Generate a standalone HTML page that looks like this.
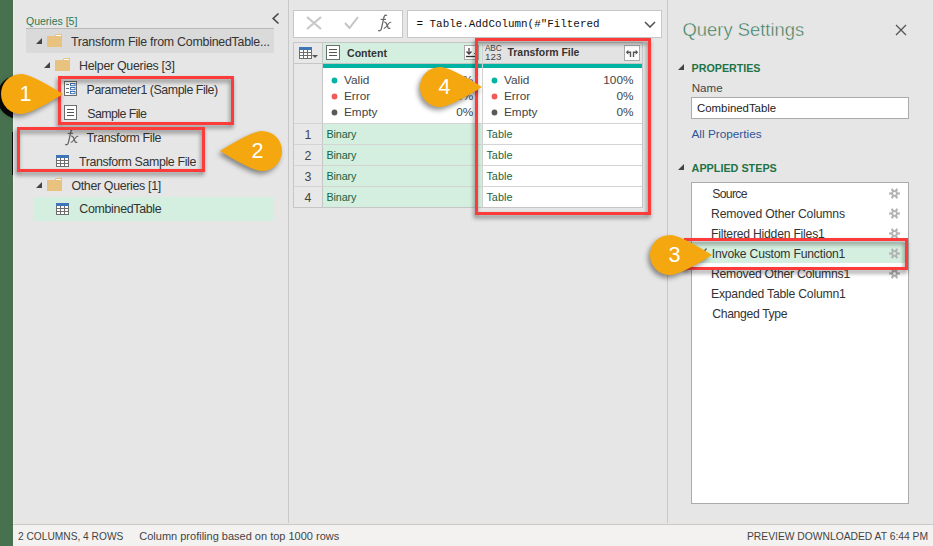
<!DOCTYPE html>
<html><head><meta charset="utf-8"><style>
html,body{margin:0;padding:0;}
body{width:933px;height:546px;position:relative;overflow:hidden;background:#e6e6e6;font-family:"Liberation Sans",sans-serif;}
.a{position:absolute;}
.t{position:absolute;white-space:pre;}
svg.a{display:block;}
</style></head><body>
<div class="a" style="left:0px;top:0px;width:13px;height:546px;background:#47714f"></div>
<div class="a" style="left:13px;top:0px;width:1px;height:524px;background:#ededed"></div>
<div class="a" style="left:0;top:0;width:13px;height:546px;overflow:hidden"><div class="a" style="left:-3px;top:75px;width:44px;height:44px;border-radius:50%;background:#0a0a0a"></div><div class="a" style="left:12px;top:132px;width:1px;height:43px;background:#0a0a0a"></div></div>
<div class="a" style="left:288px;top:0px;width:1px;height:523px;background:#c8c8c8"></div>
<div class="a" style="left:667px;top:0px;width:1px;height:523px;background:#c8c8c8"></div>
<div class="a" style="left:13px;top:524px;width:920px;height:22px;background:#f3f2f1;border-top:1px solid #c9c9c9;box-sizing:border-box"></div>
<div class="t" style="left:26px;top:15.91px;font-size:10.5px;line-height:10.5px;color:#2b7a53;font-weight:400;font-family:'Liberation Sans';">Queries [5]</div>
<div class="a" style="left:26px;top:28px;width:248px;height:1px;background:#b9b9b9"></div>
<div class="a" style="left:26px;top:29px;width:248px;height:24px;background:#dadada"></div>
<svg class="a" style="left:36px;top:38px;" width="6" height="6" viewBox="0 0 6 6"><polygon points="6,0 6,6 0,6" fill="#444"/></svg>
<svg class="a" style="left:47px;top:34px;" width="15" height="13" viewBox="0 0 15 13"><rect x="0" y="2" width="15" height="11" fill="#e8c27f"/><polygon points="7.5,2 9,0 15,0 15,3" fill="#e8c27f"/><rect x="9" y="1" width="5" height="1" fill="#fff"/></svg>
<div class="t" style="left:70.90px;top:35.80px;font-size:12.4px;line-height:12.4px;letter-spacing:-0.244px;color:#333;font-weight:400;font-family:'Liberation Sans';">Transform File from CombinedTable...</div>
<svg class="a" style="left:44px;top:62px;" width="6" height="6" viewBox="0 0 6 6"><polygon points="6,0 6,6 0,6" fill="#444"/></svg>
<svg class="a" style="left:55px;top:58px;" width="15" height="13" viewBox="0 0 15 13"><rect x="0" y="2" width="15" height="11" fill="#e8c27f"/><polygon points="7.5,2 9,0 15,0 15,3" fill="#e8c27f"/><rect x="9" y="1" width="5" height="1" fill="#fff"/></svg>
<div class="t" style="left:79.00px;top:59.80px;font-size:12.4px;line-height:12.4px;letter-spacing:-0.277px;color:#333;font-weight:400;font-family:'Liberation Sans';">Helper Queries [3]</div>
<svg class="a" style="left:64px;top:81px;" width="13" height="15" viewBox="0 0 13 15"><rect x="0.5" y="0.5" width="12" height="14" fill="#fff" stroke="#6d6d6d"/><path d="M2 3.5H5" stroke="#6d6d6d"/><rect x="6.5" y="2.5" width="4.5" height="2.2" fill="none" stroke="#3f74b6"/><path d="M2 7.5H5" stroke="#6d6d6d"/><rect x="6.5" y="6.5" width="4.5" height="2.2" fill="none" stroke="#3f74b6"/><path d="M2 11.5H5" stroke="#6d6d6d"/><rect x="6.5" y="10.5" width="4.5" height="2.2" fill="none" stroke="#3f74b6"/></svg>
<div class="t" style="left:86.60px;top:83.80px;font-size:12.4px;line-height:12.4px;letter-spacing:-0.449px;color:#333;font-weight:400;font-family:'Liberation Sans';">Parameter1 (Sample File)</div>
<svg class="a" style="left:64px;top:105px;" width="13" height="15" viewBox="0 0 13 15"><rect x="0.5" y="0.5" width="12" height="14" fill="#fff" stroke="#6d6d6d"/><path d="M3 4.5H10" stroke="#555"/><path d="M3 7.5H10" stroke="#555"/><path d="M3 10.5H10" stroke="#555"/></svg>
<div class="t" style="left:87.30px;top:107.80px;font-size:12.4px;line-height:12.4px;letter-spacing:-0.583px;color:#333;font-weight:400;font-family:'Liberation Sans';">Sample File</div>
<svg class="a" style="left:59px;top:124px;" width="22" height="22" viewBox="0 0 22 22"><path d="M15 5.6C14.2 4.8 12.6 4.8 12 7L9.4 18.6C9 20.6 7.6 21.2 6.2 20.4" fill="none" stroke="#666" stroke-width="1.25"/><path d="M8.6 9.4H14" stroke="#666" stroke-width="1.1"/><path d="M12.2 12.2C13.6 11.8 14.2 12.6 14.8 14.2L16 17.4C16.5 18.6 17.4 18.6 18.2 18" fill="none" stroke="#666" stroke-width="1.3"/><path d="M19.2 12.4C18.2 11.9 17.4 12.6 16.4 13.8L14 17C13.3 18 12.5 18.4 11.8 18" fill="none" stroke="#666" stroke-width="1.1"/></svg>
<div class="t" style="left:86.60px;top:131.50px;font-size:12.4px;line-height:12.4px;letter-spacing:-0.347px;color:#333;font-weight:400;font-family:'Liberation Sans';">Transform File</div>
<svg class="a" style="left:56px;top:155px;" width="13" height="12" viewBox="0 0 13 12"><rect x="0.5" y="0.5" width="12" height="11" fill="#fff" stroke="#6d6d6d"/><rect x="0" y="0" width="13" height="3" fill="#3f74b6"/><path d="M4.5 3V12M8.5 3V12M0 5.5H13M0 8.5H13" stroke="#6d6d6d" stroke-width="1"/></svg>
<div class="t" style="left:78.90px;top:155.50px;font-size:12.4px;line-height:12.4px;letter-spacing:-0.373px;color:#333;font-weight:400;font-family:'Liberation Sans';">Transform Sample File</div>
<svg class="a" style="left:36px;top:182px;" width="6" height="6" viewBox="0 0 6 6"><polygon points="6,0 6,6 0,6" fill="#444"/></svg>
<svg class="a" style="left:47px;top:178px;" width="15" height="13" viewBox="0 0 15 13"><rect x="0" y="2" width="15" height="11" fill="#e8c27f"/><polygon points="7.5,2 9,0 15,0 15,3" fill="#e8c27f"/><rect x="9" y="1" width="5" height="1" fill="#fff"/></svg>
<div class="t" style="left:71.40px;top:179.50px;font-size:12.4px;line-height:12.4px;letter-spacing:-0.325px;color:#333;font-weight:400;font-family:'Liberation Sans';">Other Queries [1]</div>
<div class="a" style="left:34px;top:197px;width:240px;height:24px;background:#d4efdf"></div>
<svg class="a" style="left:56px;top:203px;" width="13" height="12" viewBox="0 0 13 12"><rect x="0.5" y="0.5" width="12" height="11" fill="#fff" stroke="#6d6d6d"/><rect x="0" y="0" width="13" height="3" fill="#3f74b6"/><path d="M4.5 3V12M8.5 3V12M0 5.5H13M0 8.5H13" stroke="#6d6d6d" stroke-width="1"/></svg>
<div class="t" style="left:79.30px;top:203.30px;font-size:12.4px;line-height:12.4px;letter-spacing:-0.309px;color:#333;font-weight:400;font-family:'Liberation Sans';">CombinedTable</div>
<svg class="a" style="left:271px;top:12px;" width="9" height="13" viewBox="0 0 9 13"><path d="M7.5 1.5L2.2 6.5L7.5 11.5" fill="none" stroke="#4a4a4a" stroke-width="1.7"/></svg>
<div class="a" style="left:293px;top:10px;width:110px;height:28px;background:#fff;border:1px solid #c6c6c6;box-sizing:border-box"></div>
<svg class="a" style="left:306px;top:16px;" width="16" height="14" viewBox="0 0 16 14"><path d="M1 1L15 13M15 1L1 13" stroke="#c8c8c8" stroke-width="2.3"/></svg>
<svg class="a" style="left:344px;top:16px;" width="15" height="13" viewBox="0 0 15 13"><path d="M1 7L5.5 12L14 1" fill="none" stroke="#c4c4c4" stroke-width="2"/></svg>
<svg class="a" style="left:372px;top:10px;" width="22" height="22" viewBox="0 0 22 22"><path d="M15 5.6C14.2 4.8 12.6 4.8 12 7L9.4 18.6C9 20.6 7.6 21.2 6.2 20.4" fill="none" stroke="#666" stroke-width="1.25"/><path d="M8.6 9.4H14" stroke="#666" stroke-width="1.1"/><path d="M12.2 12.2C13.6 11.8 14.2 12.6 14.8 14.2L16 17.4C16.5 18.6 17.4 18.6 18.2 18" fill="none" stroke="#666" stroke-width="1.3"/><path d="M19.2 12.4C18.2 11.9 17.4 12.6 16.4 13.8L14 17C13.3 18 12.5 18.4 11.8 18" fill="none" stroke="#666" stroke-width="1.1"/></svg>
<div class="a" style="left:407px;top:10px;width:255px;height:28px;background:#fff;border:1px solid #c6c6c6;box-sizing:border-box"></div>
<div class="t" style="left:416.5px;top:18.57px;font-size:10.9px;line-height:10.9px;color:#111;font-weight:400;font-family:'Liberation Mono';">= Table.AddColumn(#&quot;Filtered</div>
<svg class="a" style="left:644px;top:21px;" width="12" height="7" viewBox="0 0 12 7"><path d="M1 1L6 6L11 1" fill="none" stroke="#555" stroke-width="1.6"/></svg>
<div class="a" style="left:293px;top:42px;width:350px;height:166px;background:#fff;border:1px solid #c6c6c6;box-sizing:border-box"></div>
<div class="a" style="left:294px;top:43px;width:28px;height:164px;background:#e8e8e8"></div>
<div class="a" style="left:322px;top:43px;width:1px;height:164px;background:#c6c6c6"></div>
<div class="a" style="left:323px;top:43px;width:159px;height:20px;background:#d4efdf"></div>
<div class="a" style="left:483px;top:43px;width:159px;height:20px;background:#e3e3e3"></div>
<div class="a" style="left:294px;top:63px;width:348px;height:1px;background:#c6c6c6"></div>
<div class="a" style="left:323px;top:64px;width:319px;height:4px;background:#01b3a3"></div>
<div class="a" style="left:482px;top:43px;width:1px;height:164px;background:#d0d0d0"></div>
<svg class="a" style="left:299px;top:47px;" width="13" height="12" viewBox="0 0 13 12"><rect x="0.5" y="0.5" width="12" height="11" fill="#fff" stroke="#6d6d6d"/><rect x="0" y="0" width="13" height="3" fill="#3f74b6"/><path d="M4.5 3V12M8.5 3V12M0 5.5H13M0 8.5H13" stroke="#6d6d6d" stroke-width="1"/></svg>
<svg class="a" style="left:312px;top:55px;" width="6" height="3" viewBox="0 0 6 3"><polygon points="0,0 6,0 3,3" fill="#555"/></svg>
<svg class="a" style="left:326px;top:45px;" width="14" height="15" viewBox="0 0 14 15"><rect x="0.5" y="0.5" width="13" height="14" fill="#fff" stroke="#6d6d6d"/><path d="M3 4.5H11" stroke="#555"/><path d="M3 7.5H11" stroke="#555"/><path d="M3 10.5H11" stroke="#555"/></svg>
<div class="t" style="left:347px;top:48.03px;font-size:10.6px;line-height:10.6px;color:#333;font-weight:700;font-family:'Liberation Sans';">Content</div>
<div class="a" style="left:464px;top:45px;width:15px;height:15px;background:#fff;border:1px solid #a9a9a9;box-sizing:border-box"></div>
<svg class="a" style="left:464px;top:45px;" width="15" height="15" viewBox="0 0 15 15"><path d="M5 3V9M2.5 6.5L5 9L7.5 6.5" fill="none" stroke="#444" stroke-width="1.3"/><path d="M2 11.5H13" stroke="#333" stroke-width="1.3"/><path d="M10 8L11.5 9.5L13 8" fill="none" stroke="#666"/></svg>
<div class="t" style="left:485px;top:43.77px;font-size:8.3px;line-height:8.3px;color:#444;font-weight:400;font-family:'Liberation Sans';letter-spacing:-0.2px">ABC</div>
<div class="t" style="left:485px;top:51.60px;font-size:9.8px;line-height:9.8px;color:#444;font-weight:400;font-family:'Liberation Sans';">123</div>
<div class="t" style="left:507.5px;top:48.15px;font-size:10.45px;line-height:10.45px;color:#333;font-weight:700;font-family:'Liberation Sans';">Transform File</div>
<div class="a" style="left:624px;top:45px;width:16px;height:16px;background:#fff;border:1px solid #a9a9a9;box-sizing:border-box"></div>
<svg class="a" style="left:624px;top:45px;" width="16" height="16" viewBox="0 0 16 16"><path d="M6.5 12V7.3H3.5M9.5 12V7.3H12.5" fill="none" stroke="#555" stroke-width="1.4"/><polygon points="1.8,7.3 4.3,4.8 4.3,9.8" fill="#555"/><polygon points="14.2,7.3 11.7,4.8 11.7,9.8" fill="#555"/></svg>
<svg class="a" style="left:330.5px;top:76.5px;" width="7" height="7" viewBox="0 0 7 7"><circle cx="3.5" cy="3.5" r="2.9" fill="#01b3a3"/></svg>
<svg class="a" style="left:330.5px;top:92.5px;" width="7" height="7" viewBox="0 0 7 7"><circle cx="3.5" cy="3.5" r="2.9" fill="#f05a5a"/></svg>
<svg class="a" style="left:330.5px;top:108.5px;" width="7" height="7" viewBox="0 0 7 7"><circle cx="3.5" cy="3.5" r="2.9" fill="#595959"/></svg>
<div class="t" style="left:344px;top:74.51px;font-size:11.8px;line-height:11.8px;color:#444;font-weight:400;font-family:'Liberation Sans';">Valid</div>
<div class="t" style="left:344px;top:90.51px;font-size:11.8px;line-height:11.8px;color:#444;font-weight:400;font-family:'Liberation Sans';">Error</div>
<div class="t" style="left:344px;top:106.51px;font-size:11.8px;line-height:11.8px;color:#444;font-weight:400;font-family:'Liberation Sans';">Empty</div>
<svg class="a" style="left:490.5px;top:76.5px;" width="7" height="7" viewBox="0 0 7 7"><circle cx="3.5" cy="3.5" r="2.9" fill="#01b3a3"/></svg>
<svg class="a" style="left:490.5px;top:92.5px;" width="7" height="7" viewBox="0 0 7 7"><circle cx="3.5" cy="3.5" r="2.9" fill="#f05a5a"/></svg>
<svg class="a" style="left:490.5px;top:108.5px;" width="7" height="7" viewBox="0 0 7 7"><circle cx="3.5" cy="3.5" r="2.9" fill="#595959"/></svg>
<div class="t" style="left:504px;top:74.51px;font-size:11.8px;line-height:11.8px;color:#444;font-weight:400;font-family:'Liberation Sans';">Valid</div>
<div class="t" style="left:504px;top:90.51px;font-size:11.8px;line-height:11.8px;color:#444;font-weight:400;font-family:'Liberation Sans';">Error</div>
<div class="t" style="left:504px;top:106.51px;font-size:11.8px;line-height:11.8px;color:#444;font-weight:400;font-family:'Liberation Sans';">Empty</div>
<div class="t" style="right:299.5px;top:74.51px;font-size:11.8px;line-height:11.8px;text-align:right;color:#444;font-weight:400;font-family:'Liberation Sans';">100%</div>
<div class="t" style="right:459.7px;top:74.51px;font-size:11.8px;line-height:11.8px;text-align:right;color:#444;font-weight:400;font-family:'Liberation Sans';">0%</div>
<div class="t" style="right:459.7px;top:90.51px;font-size:11.8px;line-height:11.8px;text-align:right;color:#444;font-weight:400;font-family:'Liberation Sans';">0%</div>
<div class="t" style="right:459.7px;top:106.51px;font-size:11.8px;line-height:11.8px;text-align:right;color:#444;font-weight:400;font-family:'Liberation Sans';">0%</div>
<div class="t" style="right:299.5px;top:90.51px;font-size:11.8px;line-height:11.8px;text-align:right;color:#444;font-weight:400;font-family:'Liberation Sans';">0%</div>
<div class="t" style="right:299.5px;top:106.51px;font-size:11.8px;line-height:11.8px;text-align:right;color:#444;font-weight:400;font-family:'Liberation Sans';">0%</div>
<div class="a" style="left:294px;top:123px;width:348px;height:1px;background:#d4d4d4"></div>
<div class="a" style="left:323px;top:124px;width:159px;height:20px;background:#d4efdf"></div>
<div class="t" style="right:621.5px;top:128.60px;font-size:12.4px;line-height:12.4px;text-align:right;color:#444;font-weight:400;font-family:'Liberation Sans';">1</div>
<div class="t" style="left:326.40px;top:128.66px;font-size:10.8px;line-height:10.8px;letter-spacing:-0.121px;color:#176341;font-weight:400;font-family:'Liberation Sans';">Binary</div>
<div class="t" style="left:486.40px;top:128.66px;font-size:10.8px;line-height:10.8px;letter-spacing:0.048px;color:#176341;font-weight:400;font-family:'Liberation Sans';">Table</div>
<div class="a" style="left:294px;top:144px;width:348px;height:1px;background:#d4d4d4"></div>
<div class="a" style="left:323px;top:145px;width:159px;height:20px;background:#d4efdf"></div>
<div class="t" style="right:621.5px;top:149.60px;font-size:12.4px;line-height:12.4px;text-align:right;color:#444;font-weight:400;font-family:'Liberation Sans';">2</div>
<div class="t" style="left:326.40px;top:149.66px;font-size:10.8px;line-height:10.8px;letter-spacing:-0.121px;color:#176341;font-weight:400;font-family:'Liberation Sans';">Binary</div>
<div class="t" style="left:486.40px;top:149.66px;font-size:10.8px;line-height:10.8px;letter-spacing:0.048px;color:#176341;font-weight:400;font-family:'Liberation Sans';">Table</div>
<div class="a" style="left:294px;top:165px;width:348px;height:1px;background:#d4d4d4"></div>
<div class="a" style="left:323px;top:166px;width:159px;height:20px;background:#d4efdf"></div>
<div class="t" style="right:621.5px;top:170.60px;font-size:12.4px;line-height:12.4px;text-align:right;color:#444;font-weight:400;font-family:'Liberation Sans';">3</div>
<div class="t" style="left:326.40px;top:170.66px;font-size:10.8px;line-height:10.8px;letter-spacing:-0.121px;color:#176341;font-weight:400;font-family:'Liberation Sans';">Binary</div>
<div class="t" style="left:486.40px;top:170.66px;font-size:10.8px;line-height:10.8px;letter-spacing:0.048px;color:#176341;font-weight:400;font-family:'Liberation Sans';">Table</div>
<div class="a" style="left:294px;top:186px;width:348px;height:1px;background:#d4d4d4"></div>
<div class="a" style="left:323px;top:187px;width:159px;height:20px;background:#d4efdf"></div>
<div class="t" style="right:621.5px;top:191.60px;font-size:12.4px;line-height:12.4px;text-align:right;color:#444;font-weight:400;font-family:'Liberation Sans';">4</div>
<div class="t" style="left:326.40px;top:191.66px;font-size:10.8px;line-height:10.8px;letter-spacing:-0.121px;color:#176341;font-weight:400;font-family:'Liberation Sans';">Binary</div>
<div class="t" style="left:486.40px;top:191.66px;font-size:10.8px;line-height:10.8px;letter-spacing:0.048px;color:#176341;font-weight:400;font-family:'Liberation Sans';">Table</div>
<div class="t" style="left:682.5px;top:20.62px;font-size:18.4px;line-height:18.4px;color:#2f7756;font-weight:400;font-family:'Liberation Sans';-webkit-text-stroke:0.45px #e6e6e6;paint-order:fill">Query Settings</div>
<svg class="a" style="left:895px;top:24px;" width="12" height="12" viewBox="0 0 12 12"><path d="M1 1L11 11M11 1L1 11" stroke="#555" stroke-width="1.3"/></svg>
<svg class="a" style="left:678px;top:64px;" width="6" height="6" viewBox="0 0 6 6"><polygon points="6,0 6,6 0,6" fill="#444"/></svg>
<div class="t" style="left:691.6px;top:62.54px;font-size:10.7px;line-height:10.7px;color:#217346;font-weight:700;font-family:'Liberation Sans';">PROPERTIES</div>
<div class="t" style="left:691.7px;top:81.68px;font-size:11.6px;line-height:11.6px;color:#444;font-weight:400;font-family:'Liberation Sans';">Name</div>
<div class="a" style="left:691px;top:97px;width:218px;height:22px;background:#fff;border:1px solid #ababab;box-sizing:border-box"></div>
<div class="t" style="left:697px;top:103.15px;font-size:11.4px;line-height:11.4px;color:#222;font-weight:400;font-family:'Liberation Sans';">CombinedTable</div>
<div class="t" style="left:691.5px;top:129.01px;font-size:11.8px;line-height:11.8px;color:#2f5597;font-weight:400;font-family:'Liberation Sans';">All Properties</div>
<svg class="a" style="left:678px;top:164px;" width="6" height="6" viewBox="0 0 6 6"><polygon points="6,0 6,6 0,6" fill="#444"/></svg>
<div class="t" style="left:691.6px;top:163.46px;font-size:10.8px;line-height:10.8px;color:#217346;font-weight:700;font-family:'Liberation Sans';">APPLIED STEPS</div>
<div class="a" style="left:691px;top:182px;width:218px;height:322px;background:#fff;border:1px solid #ababab;box-sizing:border-box"></div>
<div class="a" style="left:692px;top:242px;width:216px;height:21px;background:#d4efdf"></div>
<svg class="a" style="left:700px;top:246px;" width="10" height="8" viewBox="0 0 10 8"><path d="M3.5 6L6.5 2.5" stroke="#555" stroke-width="1.2"/></svg>
<div class="t" style="left:712.30px;top:187.57px;font-size:12.2px;line-height:12.2px;letter-spacing:-0.687px;color:#333;font-weight:400;font-family:'Liberation Sans';">Source</div>
<svg class="a" style="left:889.0px;top:187.9px;" width="11" height="11" viewBox="0 0 11 11"><circle cx="5.5" cy="5.5" r="2.3" fill="none" stroke="#b3b3b3" stroke-width="1.7"/><line x1="8.00" y1="5.50" x2="10.90" y2="5.50" stroke="#b3b3b3" stroke-width="2.2"/><line x1="6.75" y1="7.67" x2="8.20" y2="10.18" stroke="#b3b3b3" stroke-width="2.2"/><line x1="4.25" y1="7.67" x2="2.80" y2="10.18" stroke="#b3b3b3" stroke-width="2.2"/><line x1="3.00" y1="5.50" x2="0.10" y2="5.50" stroke="#b3b3b3" stroke-width="2.2"/><line x1="4.25" y1="3.33" x2="2.80" y2="0.82" stroke="#b3b3b3" stroke-width="2.2"/><line x1="6.75" y1="3.33" x2="8.20" y2="0.82" stroke="#b3b3b3" stroke-width="2.2"/></svg>
<div class="t" style="left:711.10px;top:207.57px;font-size:12.2px;line-height:12.2px;letter-spacing:-0.180px;color:#333;font-weight:400;font-family:'Liberation Sans';">Removed Other Columns</div>
<svg class="a" style="left:889.0px;top:207.9px;" width="11" height="11" viewBox="0 0 11 11"><circle cx="5.5" cy="5.5" r="2.3" fill="none" stroke="#b3b3b3" stroke-width="1.7"/><line x1="8.00" y1="5.50" x2="10.90" y2="5.50" stroke="#b3b3b3" stroke-width="2.2"/><line x1="6.75" y1="7.67" x2="8.20" y2="10.18" stroke="#b3b3b3" stroke-width="2.2"/><line x1="4.25" y1="7.67" x2="2.80" y2="10.18" stroke="#b3b3b3" stroke-width="2.2"/><line x1="3.00" y1="5.50" x2="0.10" y2="5.50" stroke="#b3b3b3" stroke-width="2.2"/><line x1="4.25" y1="3.33" x2="2.80" y2="0.82" stroke="#b3b3b3" stroke-width="2.2"/><line x1="6.75" y1="3.33" x2="8.20" y2="0.82" stroke="#b3b3b3" stroke-width="2.2"/></svg>
<div class="t" style="left:711.00px;top:227.57px;font-size:12.2px;line-height:12.2px;letter-spacing:-0.227px;color:#333;font-weight:400;font-family:'Liberation Sans';">Filtered Hidden Files1</div>
<svg class="a" style="left:889.0px;top:227.9px;" width="11" height="11" viewBox="0 0 11 11"><circle cx="5.5" cy="5.5" r="2.3" fill="none" stroke="#b3b3b3" stroke-width="1.7"/><line x1="8.00" y1="5.50" x2="10.90" y2="5.50" stroke="#b3b3b3" stroke-width="2.2"/><line x1="6.75" y1="7.67" x2="8.20" y2="10.18" stroke="#b3b3b3" stroke-width="2.2"/><line x1="4.25" y1="7.67" x2="2.80" y2="10.18" stroke="#b3b3b3" stroke-width="2.2"/><line x1="3.00" y1="5.50" x2="0.10" y2="5.50" stroke="#b3b3b3" stroke-width="2.2"/><line x1="4.25" y1="3.33" x2="2.80" y2="0.82" stroke="#b3b3b3" stroke-width="2.2"/><line x1="6.75" y1="3.33" x2="8.20" y2="0.82" stroke="#b3b3b3" stroke-width="2.2"/></svg>
<div class="t" style="left:711.80px;top:247.57px;font-size:12.2px;line-height:12.2px;letter-spacing:-0.214px;color:#333;font-weight:400;font-family:'Liberation Sans';">Invoke Custom Function1</div>
<svg class="a" style="left:889.0px;top:247.9px;" width="11" height="11" viewBox="0 0 11 11"><circle cx="5.5" cy="5.5" r="2.3" fill="none" stroke="#b3b3b3" stroke-width="1.7"/><line x1="8.00" y1="5.50" x2="10.90" y2="5.50" stroke="#b3b3b3" stroke-width="2.2"/><line x1="6.75" y1="7.67" x2="8.20" y2="10.18" stroke="#b3b3b3" stroke-width="2.2"/><line x1="4.25" y1="7.67" x2="2.80" y2="10.18" stroke="#b3b3b3" stroke-width="2.2"/><line x1="3.00" y1="5.50" x2="0.10" y2="5.50" stroke="#b3b3b3" stroke-width="2.2"/><line x1="4.25" y1="3.33" x2="2.80" y2="0.82" stroke="#b3b3b3" stroke-width="2.2"/><line x1="6.75" y1="3.33" x2="8.20" y2="0.82" stroke="#b3b3b3" stroke-width="2.2"/></svg>
<div class="t" style="left:711.00px;top:267.57px;font-size:12.2px;line-height:12.2px;letter-spacing:-0.243px;color:#333;font-weight:400;font-family:'Liberation Sans';">Removed Other Columns1</div>
<svg class="a" style="left:889.0px;top:267.9px;" width="11" height="11" viewBox="0 0 11 11"><circle cx="5.5" cy="5.5" r="2.3" fill="none" stroke="#b3b3b3" stroke-width="1.7"/><line x1="8.00" y1="5.50" x2="10.90" y2="5.50" stroke="#b3b3b3" stroke-width="2.2"/><line x1="6.75" y1="7.67" x2="8.20" y2="10.18" stroke="#b3b3b3" stroke-width="2.2"/><line x1="4.25" y1="7.67" x2="2.80" y2="10.18" stroke="#b3b3b3" stroke-width="2.2"/><line x1="3.00" y1="5.50" x2="0.10" y2="5.50" stroke="#b3b3b3" stroke-width="2.2"/><line x1="4.25" y1="3.33" x2="2.80" y2="0.82" stroke="#b3b3b3" stroke-width="2.2"/><line x1="6.75" y1="3.33" x2="8.20" y2="0.82" stroke="#b3b3b3" stroke-width="2.2"/></svg>
<div class="t" style="left:711.00px;top:287.57px;font-size:12.2px;line-height:12.2px;letter-spacing:-0.219px;color:#333;font-weight:400;font-family:'Liberation Sans';">Expanded Table Column1</div>
<div class="t" style="left:712.30px;top:307.57px;font-size:12.2px;line-height:12.2px;letter-spacing:-0.345px;color:#333;font-weight:400;font-family:'Liberation Sans';">Changed Type</div>
<div class="t" style="left:18px;top:531.67px;font-size:10.2px;line-height:10.2px;color:#444;font-weight:400;font-family:'Liberation Sans';">2 COLUMNS, 4 ROWS</div>
<div class="t" style="left:139.3px;top:530.99px;font-size:11px;line-height:11px;color:#444;font-weight:400;font-family:'Liberation Sans';">Column profiling based on top 1000 rows</div>
<div class="t" style="left:747px;top:531.78px;font-size:10.3px;line-height:10.3px;color:#444;font-weight:400;font-family:'Liberation Sans';">PREVIEW DOWNLOADED AT 6:44 PM</div>
<div class="a" style="left:58px;top:76px;width:176px;height:49px;border:3px solid #fc3b3b;box-sizing:border-box;filter:drop-shadow(-1px 3px 2px rgba(0,0,0,0.45))"></div>
<div class="a" style="left:17px;top:127px;width:188px;height:44.5px;border:3px solid #fc3b3b;box-sizing:border-box;filter:drop-shadow(-1px 3px 2px rgba(0,0,0,0.45))"></div>
<div class="a" style="left:475px;top:38px;width:176px;height:177px;border:3px solid #fc3b3b;box-sizing:border-box;filter:drop-shadow(-1px 3px 2px rgba(0,0,0,0.45))"></div>
<div class="a" style="left:684px;top:238px;width:224px;height:32px;border:3px solid #fc3b3b;box-sizing:border-box;filter:drop-shadow(-1px 3px 2px rgba(0,0,0,0.45))"></div>
<svg class="a" style="left:-39.0px;top:59.0px;filter:drop-shadow(-1.5px 3.5px 2.5px rgba(0,0,0,0.42));overflow:visible" width="120" height="70" viewBox="0 0 120 70"><path transform="translate(60.0 35.0)" d="M42 0 Q10 -20 0 -20 A20 20 0 0 0 0 20 Q10 20 42 0 Z" fill="#f5a70f"/></svg>
<div class="t" style="left:5.5px;width:40px;text-align:center;top:83.42px;font-size:21.6px;line-height:21.6px;color:#fff">1</div>
<svg class="a" style="left:202.0px;top:116.0px;filter:drop-shadow(-1.5px 3.5px 2.5px rgba(0,0,0,0.42));overflow:visible" width="120" height="70" viewBox="0 0 120 70"><path transform="translate(60.0 35.0) scale(-1 1)" d="M42 0 Q10 -20 0 -20 A20 20 0 0 0 0 20 Q10 20 42 0 Z" fill="#f5a70f"/></svg>
<div class="t" style="left:237.5px;width:40px;text-align:center;top:140.42px;font-size:21.6px;line-height:21.6px;color:#fff">2</div>
<svg class="a" style="left:610.0px;top:220.0px;filter:drop-shadow(-1.5px 3.5px 2.5px rgba(0,0,0,0.42));overflow:visible" width="120" height="70" viewBox="0 0 120 70"><path transform="translate(60.0 35.0)" d="M42 0 Q10 -20 0 -20 A20 20 0 0 0 0 20 Q10 20 42 0 Z" fill="#f5a70f"/></svg>
<div class="t" style="left:654.5px;width:40px;text-align:center;top:244.42px;font-size:21.6px;line-height:21.6px;color:#fff">3</div>
<svg class="a" style="left:380.0px;top:52.0px;filter:drop-shadow(-1.5px 3.5px 2.5px rgba(0,0,0,0.42));overflow:visible" width="120" height="70" viewBox="0 0 120 70"><path transform="translate(60.0 35.0)" d="M42 0 Q10 -20 0 -20 A20 20 0 0 0 0 20 Q10 20 42 0 Z" fill="#f5a70f"/></svg>
<div class="t" style="left:424.5px;width:40px;text-align:center;top:76.42px;font-size:21.6px;line-height:21.6px;color:#fff">4</div>
</body></html>
